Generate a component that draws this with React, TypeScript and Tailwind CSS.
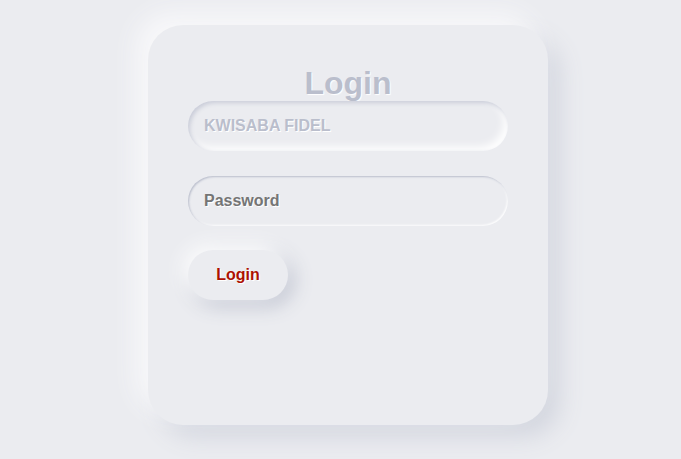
import { useState } from "react";

const fieldClass =
    "h-[50px] w-[320px] rounded-full border-none bg-[#ebecf0] px-4 text-base font-bold text-[#babecc] outline-none [text-shadow:1px_1px_0_#fff] placeholder:text-[#757575]";

export default function App() {
    const [name, setName] = useState("KWISABA FIDEL");
    const [password, setPassword] = useState("");

    return (
        <div className="flex min-h-[459px] justify-center bg-[#ebecf0] pl-[15px] pt-[25px] font-['Liberation_Sans',Arial,sans-serif]">
            <form
                className="flex h-[400px] w-[400px] flex-col rounded-[35px] bg-[#ebecf0] px-10 pt-[40px] shadow-[-12px_-12px_24px_#f8f8fa,12px_12px_24px_#d3d6df]"
                onSubmit={(e) => e.preventDefault()}
            >
                <h1 className="text-center text-[32px] font-bold leading-[36px] text-[#babecc] [text-shadow:1px_1px_1px_#fff]">
                    Login
                </h1>
                <input
                    className={`${fieldClass} shadow-[inset_2px_2px_4px_#c9ccd8,inset_-4px_-4px_8px_#fff]`}
                    value={name}
                    onChange={(e) => setName(e.target.value)}
                />
                <input
                    className={`${fieldClass} mt-[25px] shadow-[inset_1px_1px_2px_#babecc,inset_-1px_-1px_2px_#fff]`}
                    type="password"
                    placeholder="Password"
                    value={password}
                    onChange={(e) => setPassword(e.target.value)}
                />
                <button
                    type="submit"
                    className="mt-[24px] h-[50px] w-[100px] rounded-full bg-[#ebecf0] text-base font-bold text-[#ae1100] [text-shadow:1px_1px_0_#fff] shadow-[-5px_-5px_20px_#fff,5px_5px_20px_#babecc]"
                >
                    Login
                </button>
            </form>
        </div>
    );
}
